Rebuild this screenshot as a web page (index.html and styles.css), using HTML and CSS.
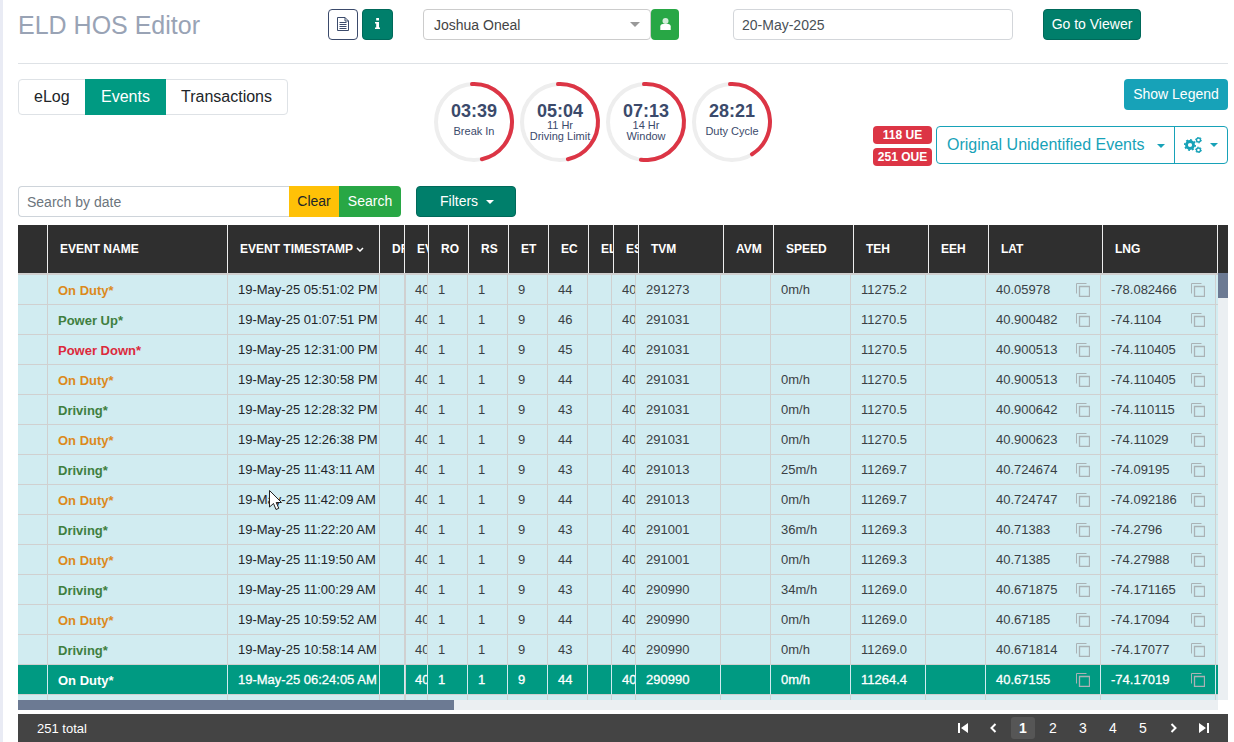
FILE: index.html
```html
<!DOCTYPE html>
<html lang="en">
<head>
  <meta charset="UTF-8" />
  <title>ELD HOS Editor</title>
  <link rel="stylesheet" href="styles.css">
</head>
<body>
  <div class="topbar">
    <h1 class="page-title">ELD HOS Editor</h1>
    <div class="title-btns">
      <button class="btn btn-outline icon-btn icon-btn-doc">
        <svg width="12" height="14" viewBox="0 0 12 14"><path d="M.5.500h7.500l3.500 3.500v9.500H.5z M8 .5v3.500h3.500" fill="none" stroke="#3b4a6b"/><path d="M2.500 5.500h7M2.500 7.500h7M2.500 9.500h7M2.500 11.500h7" stroke="#3b4a6b"/></svg>
      </button>
      <button class="btn btn-teal icon-btn">
        <svg width="5" height="11" viewBox="0 0 5 11"><path d="M1.200 0h2.800v2.500H1.200z M0 4h4v5.500h1V11H0V9.500h1.200V5.500H0z" fill="#fff"/></svg>
      </button>
    </div>
    <div class="driver-group">
      <div class="driver-select">Joshua Oneal <span class="select-caret"></span></div>
      <button class="btn btn-green driver-btn">
        <svg width="11" height="12" viewBox="0 0 11 12"><circle cx="5.500" cy="3" r="3" fill="#fff" opacity=".8"/><path d="M.3 12V8.500C.3 7 1.400 6 2.800 6h5.400c1.400 0 2.500 1 2.500 2.500V12z" fill="#fff"/></svg>
      </button>
    </div>
    <div class="date-input">20-May-2025</div>
    <button class="btn btn-teal viewer-btn">Go to Viewer</button>
  </div>

  <div class="summary">
    <div class="tabs">
      <a class="tab">eLog</a>
      <a class="tab tab-active">Events</a>
      <a class="tab">Transactions</a>
    </div>

    <div class="gauges">
      <div class="gauge">
        <svg width="82" height="82" viewBox="0 0 82 82"><circle class="gauge-track" cx="41" cy="41" r="38"/><circle class="gauge-arc" cx="41" cy="41" r="38" pathLength="100" stroke-dasharray="47.500 100"/></svg>
        <div class="gauge-text"><b>03:39</b><span class="label-one">Break In</span></div>
      </div>
      <div class="gauge">
        <svg width="82" height="82" viewBox="0 0 82 82"><circle class="gauge-track" cx="41" cy="41" r="38"/><circle class="gauge-arc" cx="41" cy="41" r="38" pathLength="100" stroke-dasharray="47.500 100"/></svg>
        <div class="gauge-text"><b>05:04</b><span>11 Hr<br>Driving Limit</span></div>
      </div>
      <div class="gauge">
        <svg width="82" height="82" viewBox="0 0 82 82"><circle class="gauge-track" cx="41" cy="41" r="38"/><circle class="gauge-arc" cx="41" cy="41" r="38" pathLength="100" stroke-dasharray="53 100"/></svg>
        <div class="gauge-text"><b>07:13</b><span>14 Hr<br>Window</span></div>
      </div>
      <div class="gauge">
        <svg width="82" height="82" viewBox="0 0 82 82"><circle class="gauge-track" cx="41" cy="41" r="38"/><circle class="gauge-arc" cx="41" cy="41" r="38" pathLength="100" stroke-dasharray="42 100"/></svg>
        <div class="gauge-text"><b>28:21</b><span class="label-one">Duty Cycle</span></div>
      </div>
    </div>

    <div class="summary-right">
      <button class="btn btn-info legend-btn">Show Legend</button>
      <div class="ue-row">
        <div class="badges">
          <span class="badge">118 UE</span>
          <span class="badge">251 OUE</span>
        </div>
        <div class="ue-group">
          <div class="ue-select">Original Unidentified Events <span class="caret"></span></div>
          <div class="ue-gear">
            <svg class="gears" width="18" height="16" viewBox="0 0 18 16">
              <circle cx="6" cy="8" r="3.500" stroke-width="2.800"/>
              <circle cx="6" cy="8" r="5.200" stroke-width="1.600" pathLength="16" stroke-dasharray="1 1"/>
              <circle cx="14.500" cy="3" r="2" stroke-width="1.400"/>
              <circle cx="14.500" cy="3" r="2.900" stroke-width="1" pathLength="12" stroke-dasharray="1 1"/>
              <circle cx="14.500" cy="13" r="2" stroke-width="1.400"/>
              <circle cx="14.500" cy="13" r="2.900" stroke-width="1" pathLength="12" stroke-dasharray="1 1"/>
            </svg>
            <span class="caret"></span>
          </div>
        </div>
      </div>
    </div>
  </div>

  <div class="search-row">
    <div class="search-group">
      <div class="search-input">Search by date</div>
      <button class="btn-clear">Clear</button>
      <button class="btn-search">Search</button>
    </div>
    <button class="btn btn-teal filters-btn">Filters <span class="caret caret-white"></span></button>
  </div>

  <div class="grid">
    <div class="grid-head">
      <table class="head-table">
        <colgroup>
          <col class="h0"><col class="h1"><col class="h2"><col class="h3"><col class="h4"><col class="h5"><col class="h6"><col class="h7"><col class="h8"><col class="h9"><col class="h10"><col class="h11"><col class="h12"><col class="h13"><col class="h14"><col class="h15"><col class="h16"><col class="h17">
        </colgroup>
        <tr>
          <th></th><th>EVENT NAME</th><th>EVENT TIMESTAMP <svg width="8" height="5" viewBox="0 0 8 5"><path d="M1 1l3 3 3-3" fill="none" stroke="#fff" stroke-width="1.500"/></svg></th><th>DRIVER</th><th>EVENT</th><th>RO</th><th>RS</th><th>ET</th><th>EC</th><th>ELD</th><th>ESN</th><th>TVM</th><th>AVM</th><th>SPEED</th><th>TEH</th><th>EEH</th><th>LAT</th><th>LNG</th>
        </tr>
      </table>
    </div>
    <div class="grid-mid">
      <div class="grid-body">
        <table class="body-table">
          <colgroup>
            <col class="c0"><col class="c1"><col class="c2"><col class="c3"><col class="c4"><col class="c5"><col class="c6"><col class="c7"><col class="c8"><col class="c9"><col class="c10"><col class="c11"><col class="c12"><col class="c13"><col class="c14"><col class="c15"><col class="c16"><col class="c17"><col class="c18">
          </colgroup>
          <tbody id="rowsBody"></tbody>
        </table>
      </div>
      <div class="vscroll"><div class="vthumb"></div></div>
    </div>
    <div class="hscroll"><div class="hthumb"></div></div>
  </div>

  <div class="pager">
    <span class="pager-total">251 total</span>
    <div class="pager-links">
      <a class="page-link"><svg width="11" height="10" viewBox="0 0 11 10"><path d="M0 0h2v10H0zM10 0v10L3 5z" fill="#fff"/></svg></a>
      <a class="page-link"><svg width="7" height="10" viewBox="0 0 7 10"><path d="M5.500 1L1.500 5l4 4" fill="none" stroke="#fff" stroke-width="2"/></svg></a>
      <a class="page-link page-current">1</a>
      <a class="page-link">2</a>
      <a class="page-link">3</a>
      <a class="page-link">4</a>
      <a class="page-link">5</a>
      <a class="page-link"><svg width="7" height="10" viewBox="0 0 7 10"><path d="M1.500 1l4 4-4 4" fill="none" stroke="#fff" stroke-width="2"/></svg></a>
      <a class="page-link"><svg width="11" height="10" viewBox="0 0 11 10"><path d="M11 0H9v10h2zM1 0v10l7-5z" fill="#fff"/></svg></a>
    </div>
  </div>

  <svg class="mouse-cursor" width="14" height="21" viewBox="0 0 14 21"><path d="M.5.500v16.500l4-3.500 2.500 6 2.800-1.200-2.600-5.800h5.300z" fill="#fff" stroke="#222"/></svg>

  <script>
    const events = [
      ["On Duty*", "duty", "19-May-25 05:51:02 PM", "44", "291273", "0m/h", "11275.2", "40.05978", "-78.082466"],
      ["Power Up*", "drive", "19-May-25 01:07:51 PM", "46", "291031", "", "11270.5", "40.900482", "-74.1104"],
      ["Power Down*", "down", "19-May-25 12:31:00 PM", "45", "291031", "", "11270.5", "40.900513", "-74.110405"],
      ["On Duty*", "duty", "19-May-25 12:30:58 PM", "44", "291031", "0m/h", "11270.5", "40.900513", "-74.110405"],
      ["Driving*", "drive", "19-May-25 12:28:32 PM", "43", "291031", "0m/h", "11270.5", "40.900642", "-74.110115"],
      ["On Duty*", "duty", "19-May-25 12:26:38 PM", "44", "291031", "0m/h", "11270.5", "40.900623", "-74.11029"],
      ["Driving*", "drive", "19-May-25 11:43:11 AM", "43", "291013", "25m/h", "11269.7", "40.724674", "-74.09195"],
      ["On Duty*", "duty", "19-May-25 11:42:09 AM", "44", "291013", "0m/h", "11269.7", "40.724747", "-74.092186"],
      ["Driving*", "drive", "19-May-25 11:22:20 AM", "43", "291001", "36m/h", "11269.3", "40.71383", "-74.2796"],
      ["On Duty*", "duty", "19-May-25 11:19:50 AM", "44", "291001", "0m/h", "11269.3", "40.71385", "-74.27988"],
      ["Driving*", "drive", "19-May-25 11:00:29 AM", "43", "290990", "34m/h", "11269.0", "40.671875", "-74.171165"],
      ["On Duty*", "duty", "19-May-25 10:59:52 AM", "44", "290990", "0m/h", "11269.0", "40.67185", "-74.17094"],
      ["Driving*", "drive", "19-May-25 10:58:14 AM", "43", "290990", "0m/h", "11269.0", "40.671814", "-74.17077"],
      ["On Duty*", "selected", "19-May-25 06:24:05 AM", "44", "290990", "0m/h", "11264.4", "40.67155", "-74.17019"],
      ["", "drive", "", "", "", "", "", "", ""]
    ];

    const copyIcon = '<svg class="copy" width="14" height="14" viewBox="0 0 14 14"><path d="M.5 10.500V.5h10" fill="none" stroke="currentColor"/><path d="M3.500 3.500h10v10h-10z" fill="none" stroke="currentColor" stroke-width="1.300"/></svg>';

    let html = "";
    events.forEach((e) => {
      const blank = e[0] === "";
      const v = (x) => blank ? "" : x;
      const coord = (x) => blank ? "" : '<div class="coord"><span>' + x + '</span>' + copyIcon + '</div>';
      html += '<tr class="' + (e[1] === "selected" ? "row-selected" : "") + '">' +
        '<td></td><td class="name name-' + e[1] + '">' + e[0] + '</td><td class="stamp">' + e[2] + '</td><td></td>' +
        '<td class="event-col">' + v("40") + '</td><td>' + v("1") + '</td><td>' + v("1") + '</td><td>' + v("9") + '</td><td>' + e[3] + '</td><td></td>' +
        '<td>' + v("40") + '</td><td>' + e[4] + '</td><td></td><td>' + e[5] + '</td><td>' + e[6] + '</td><td></td>' +
        '<td>' + coord(e[7]) + '</td><td>' + coord(e[8]) + '</td><td class="tail"></td></tr>';
    });
    document.getElementById("rowsBody").innerHTML = html;
  </script>
</body>
</html>
```

FILE: styles.css
```css
* {
  box-sizing: border-box;
}

body {
  margin: 0;
  height: 742px;
  overflow: hidden;
  position: relative;
  padding: 0 6px 0 15px;
  border-left: 3px solid #e9ebf4;
  background-color: #fff;
  color: #212529;
  font-family: "Liberation Sans", Arial, sans-serif;
  font-size: 14px;
}

button {
  font-family: inherit;
}

.btn {
  border: 1px solid transparent;
  border-radius: 4px;
  font-size: 14px;
  padding: 0 0 2px;
  color: #fff;
}

.btn-teal {
  background-color: #007f6b;
  border-color: #00695a;
}

.btn-green {
  background-color: #28a745;
}

.btn-info {
  background-color: #17a2b8;
}

.btn-outline {
  background-color: #fff;
  border-color: #3b4a6b;
}

/* top bar */
.topbar {
  height: 64px;
  display: flex;
  align-items: flex-start;
  padding-top: 9px;
  border-bottom: 1px solid #dee2e6;
}

.page-title {
  margin: 0;
  width: 310px;
  font-size: 25px;
  font-weight: 400;
  line-height: 32px;
  color: #99a3b5;
}

.title-btns {
  display: flex;
  gap: 4px;
  width: 95px;
}

.icon-btn {
  width: 31px;
  height: 31px;
  display: flex;
  align-items: center;
  justify-content: center;
}

.icon-btn-doc {
  width: 30px;
}

.driver-group {
  display: flex;
  width: 310px;
}

.driver-select {
  width: 228px;
  height: 31px;
  border: 1px solid #ccc;
  border-radius: 4px;
  padding: 0 10px;
  font-size: 14px;
  line-height: 30px;
  color: #444;
  position: relative;
}

.select-caret {
  position: absolute;
  right: 10px;
  top: 12px;
  border-left: 5px solid transparent;
  border-right: 5px solid transparent;
  border-top: 5px solid #999;
}

.driver-btn {
  width: 28px;
  height: 31px;
  display: flex;
  align-items: center;
  justify-content: center;
}

.date-input {
  width: 280px;
  height: 31px;
  border: 1px solid #d3d6da;
  border-radius: 4px;
  padding: 0 8px;
  font-size: 14px;
  line-height: 30px;
  color: #495057;
  margin-right: 30px;
}

.viewer-btn {
  width: 98px;
  height: 31px;
}

/* tabs, gauges, unidentified events */
.summary {
  display: flex;
  height: 107px;
  margin-top: 15px;
}

.tabs {
  display: flex;
  width: 270px;
  height: 36px;
  border: 1px solid #dee2e6;
  border-radius: 4px;
  font-size: 16px;
  line-height: 34px;
}

.tab {
  padding: 0 15px;
  color: #212529;
}

.tab:first-child {
  width: 66px;
}

.tab-active {
  width: 81px;
  height: 36px;
  margin-top: -1px;
  padding-left: 16px;
  line-height: 36px;
  background-color: #009a82;
  color: #fff;
}

.gauges {
  display: flex;
  gap: 4px;
  margin: 2px 0 0 145px;
}

.gauge {
  width: 82px;
  height: 82px;
  position: relative;
}

.gauge circle {
  fill: none;
  stroke-width: 4;
}

.gauge-track {
  stroke: #eee;
}

.gauge-arc {
  stroke: #dc3545;
  stroke-linecap: round;
  transform: rotate(-93deg);
  transform-origin: 41px 41px;
}

.gauge-text {
  position: absolute;
  left: 0;
  right: 0;
  top: 20px;
  text-align: center;
  color: #3b4a6b;
}

.gauge-text b {
  display: block;
  font-size: 18px;
  line-height: 20px;
}

.gauge-text span {
  display: block;
  font-size: 11px;
  line-height: 11px;
  margin-top: -1px;
}

.gauge-text .label-one {
  margin-top: 5px;
}

.summary-right {
  margin-left: auto;
  display: flex;
  flex-direction: column;
  align-items: flex-end;
}

.legend-btn {
  width: 104px;
  height: 31px;
}

.ue-row {
  display: flex;
  gap: 4px;
  margin-top: 16px;
}

.badges {
  display: flex;
  flex-direction: column;
  gap: 4px;
}

.badge {
  width: 59px;
  height: 18px;
  border-radius: 4px;
  background-color: #dc3545;
  color: #fff;
  font-size: 12px;
  font-weight: 700;
  line-height: 18px;
  text-align: center;
}

.ue-group {
  display: flex;
  height: 38px;
  width: 292px;
  border: 1px solid #17a2b8;
  border-radius: 4px;
  color: #17a2b8;
}

.ue-select {
  width: 238px;
  border-right: 1px solid #17a2b8;
  padding-left: 10px;
  font-size: 16px;
  line-height: 35px;
  white-space: nowrap;
}

.ue-gear {
  flex: 1;
  display: flex;
  align-items: center;
  padding-left: 9px;
  gap: 8px;
}

.gears circle {
  fill: none;
  stroke: #17a2b8;
}

.caret {
  display: inline-block;
  margin-left: 8px;
  vertical-align: middle;
  border-left: 4.5px solid transparent;
  border-right: 4.5px solid transparent;
  border-top: 4.5px solid #17a2b8;
}

.ue-gear .caret {
  margin-left: 0;
}

.caret-white {
  margin-left: 4px;
  border-top-color: #fff;
}

/* search */
.search-row {
  display: flex;
  gap: 15px;
  height: 31px;
}

.search-group {
  display: flex;
  width: 383px;
}

.search-input {
  width: 271px;
  border: 1px solid #ced4da;
  border-right: none;
  border-radius: 4px 0 0 4px;
  padding: 0 8px;
  line-height: 30px;
  color: #6c757d;
}

.btn-clear {
  width: 50px;
  border: none;
  background-color: #ffc107;
  color: #212529;
  font-size: 14px;
  padding: 0 0 2px;
}

.btn-search {
  width: 62px;
  border: none;
  border-radius: 0 4px 4px 0;
  background-color: #28a745;
  color: #fff;
  font-size: 14px;
  padding: 0 0 2px;
}

.filters-btn {
  width: 100px;
  padding-left: 2px;
}

/* table */
.grid {
  margin-top: 8px;
  width: 1210px;
}

.head-table,
.body-table {
  table-layout: fixed;
  border-collapse: separate;
  border-spacing: 0;
}

.grid-head {
  background-color: #2f2f2f;
  height: 48px;
}

.head-table {
  width: 1199px;
}

.head-table th {
  height: 48px;
  padding: 0 0 0 12px;
  border-right: 1px solid #eee;
  color: #fff;
  font-size: 12px;
  font-weight: 700;
  text-align: left;
  overflow: hidden;
  white-space: nowrap;
}

.head-table th svg {
  vertical-align: 1px;
}

.h0 { width: 30px; }
.h1 { width: 180px; }
.h2 { width: 152px; }
.h3 { width: 25px; }
.h4 { width: 24px; }
.h5 { width: 40px; }
.h6 { width: 40px; }
.h7 { width: 40px; }
.h8 { width: 40px; }
.h9 { width: 25px; }
.h10 { width: 25px; }
.h11 { width: 85px; }
.h12 { width: 50px; }
.h13 { width: 80px; }
.h14 { width: 75px; }
.h15 { width: 60px; }
.h16 { width: 114px; }
.h17 { width: 115px; }

.grid-mid {
  display: flex;
  height: 427px;
}

.grid-body {
  width: 1200px;
  height: 427px;
  overflow: hidden;
  padding-top: 2px;
  background-color: #d0d0d0;
}

.body-table {
  width: 1200px;
}

.body-table td {
  height: 30px;
  padding: 0 0 0 10px;
  background-color: #d1ecf1;
  border-right: 1px solid #d0d0d0;
  border-bottom: 1px solid #d0d0d0;
  color: #3a3f44;
  font-size: 13px;
  overflow: hidden;
  white-space: nowrap;
}

.c0 { width: 30px; }
.c1 { width: 180px; }
.c2 { width: 152px; }
.c3 { width: 25px; }
.c4 { width: 23px; }
.c5 { width: 40px; }
.c6 { width: 40px; }
.c7 { width: 40px; }
.c8 { width: 40px; }
.c9 { width: 24px; }
.c10 { width: 24px; }
.c11 { width: 85px; }
.c12 { width: 50px; }
.c13 { width: 80px; }
.c14 { width: 75px; }
.c15 { width: 60px; }
.c16 { width: 115px; }
.c17 { width: 115px; }
.c18 { width: 2px; }

.body-table td.tail {
  padding: 0;
  border-right: none;
}

.body-table td.event-col {
  padding-left: 9px;
  border-left: 1px solid #d0d0d0;
}

.body-table td.stamp {
  color: #212529;
}

.body-table td.name {
  padding-top: 2px;
  font-weight: 700;
}

.body-table td.name-duty {
  color: #dc8a1c;
}

.body-table td.name-drive {
  color: #3f7f3f;
}

.body-table td.name-down {
  color: #dc2a3c;
}

.body-table .row-selected td {
  background-color: #009a82;
  color: #fff;
  -webkit-text-stroke: 0.3px #fff;
  border-right-color: #d1ecf1;
}

.body-table .row-selected td.name {
  color: #fff;
  -webkit-text-stroke: 0;
}

.coord {
  display: flex;
  justify-content: space-between;
  align-items: center;
  padding-right: 10px;
  line-height: 14px;
}

.copy {
  color: #aab2b5;
}

.vscroll {
  width: 10px;
  background-color: #ebeff2;
}

.vthumb {
  width: 10px;
  height: 25px;
  background-color: #6c7a93;
}

.hscroll {
  height: 10px;
  background-color: #ebeff2;
  width: 1200px;
}

.hthumb {
  width: 436px;
  height: 10px;
  background-color: #6c7a93;
}

/* pager */
.pager {
  display: flex;
  justify-content: space-between;
  align-items: center;
  height: 28px;
  margin-top: 4px;
  padding-left: 19px;
  background-color: #444;
  color: #fff;
  font-size: 13px;
}

.pager-links {
  display: flex;
  padding-right: 10px;
}

.page-link {
  width: 30px;
  height: 22px;
  display: flex;
  align-items: center;
  justify-content: center;
  font-size: 14px;
}

.page-current {
  width: 24px;
  margin: 0 3px;
  border-radius: 3px;
  background-color: #565656;
  font-weight: 700;
}

.mouse-cursor {
  position: absolute;
  left: 266px;
  top: 490px;
}
```
